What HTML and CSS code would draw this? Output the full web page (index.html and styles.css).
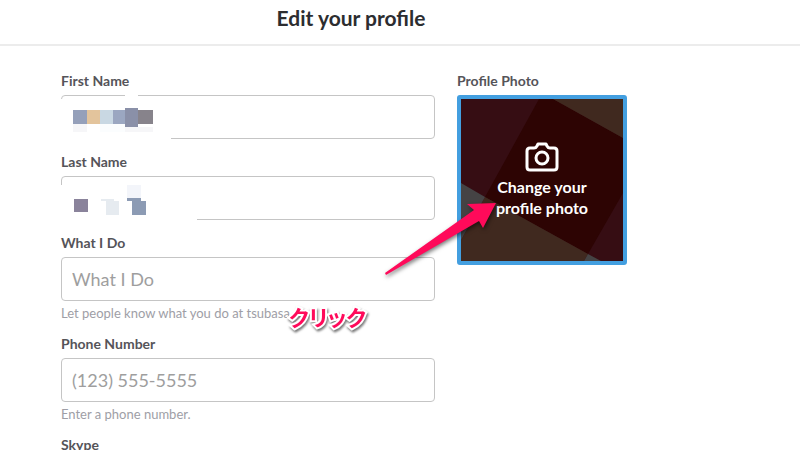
FILE: index.html
```html
<!DOCTYPE html>
<html lang="en">
<head>
<meta charset="utf-8">
<title>Edit your profile</title>
<link rel="stylesheet" href="styles.css">
</head>
<body>
<header class="header"><h1 class="title">Edit your profile</h1></header>
<main class="profile">
  <form class="form">
    <div class="field">
      <label class="label" for="first">First Name</label>
      <div class="control">
        <input class="input" id="first" type="text">
        <svg class="mosaic" width="136" height="48" aria-hidden="true">
          <path fill="#fff" d="M0 4H64V0H77V4H110V48H0Z"/>
          <path fill="#95a0ba" d="M12 15h14v14H12z"/><path fill="#e3c49c" d="M26 15h13v14H26z"/>
          <path fill="#c9d8e3" d="M39 15h13v14H39z"/><path fill="#9ba7c1" d="M52 15h12v14H52z"/>
          <path fill="#87838b" d="M77 15h15v14H77z"/><path fill="#8a90a8" d="M64 13h13v19H64z"/>
          <path fill="#f6f6f8" d="M12 29h14v8H12zM64 32h28v5H64z"/><path fill="#fbfdfe" d="M39 29h25v8H39z"/>
        </svg>
      </div>
    </div>
    <div class="field">
      <label class="label" for="last">Last Name</label>
      <div class="control">
        <input class="input" id="last" type="text">
        <svg class="mosaic" width="136" height="48" aria-hidden="true">
          <path fill="#fff" d="M0 9H136V48H0Z"/>
          <path fill="#8a839b" d="M13 23h14v13H13z"/>
          <path fill="#e6ebf0" d="M40 23h13v2h5v14H45V25h-5z"/>
          <path fill="#f3f5fa" d="M66 9h14v14H66z"/>
          <path fill="#8c9bb4" d="M66 22h14v3h5v14H71V25h-5z"/>
        </svg>
      </div>
    </div>
    <div class="field">
      <label class="label" for="role">What I Do</label>
      <div class="control"><input class="input" id="role" type="text" placeholder="What I Do"></div>
      <p class="help">Let people know what you do at tsubasa.</p>
    </div>
    <div class="field">
      <label class="label" for="phone">Phone Number</label>
      <div class="control"><input class="input" id="phone" type="tel" placeholder="(123) 555-5555"></div>
      <p class="help">Enter a phone number.</p>
    </div>
    <div class="field">
      <label class="label" for="skype">Skype</label>
      <div class="control"><input class="input" id="skype" type="text"></div>
    </div>
  </form>
  <section class="photo">
    <h2 class="label">Profile Photo</h2>
    <button class="avatar" type="button">
      <svg class="pattern" viewBox="0 0 162 162" preserveAspectRatio="none" aria-hidden="true">
        <path fill="#360d13" d="M0 0h162v162H0z"/>
        <path fill="#2d0403" d="M78 0H92L162 39V94L127 155 24 98Z"/>
        <path fill="#40291f" d="M92 0H162V39ZM24 98 127 155 123 162H0V141Z"/>
        <path fill="#454344" d="M0 84 24 98 0 141ZM127 155 140 162H123Z"/>
      </svg>
      <svg class="camera" width="34" height="30" viewBox="0 0 34 30" fill="none" stroke="#fff" stroke-width="3" stroke-linejoin="round" aria-hidden="true">
        <path d="M5 6H9Q11 6 12 4L13 2H21L22 4Q23 6 25 6H29Q32 6 32 9V25Q32 28 29 28H5Q2 28 2 25V9Q2 6 5 6Z"/>
        <circle cx="17" cy="16" r="6"/>
      </svg>
      <span class="caption">Change your<br>profile photo</span>
    </button>
    <svg class="arrow" width="120" height="80" viewBox="0 0 120 80" aria-hidden="true">
      <path fill="#ff0a5a" d="M5 73 94 10 87 4 116 3 103 28 99 21 6 75Z"/>
    </svg>
    <span class="note" lang="ja">クリック</span>
  </section>
</main>
</body>
</html>
```
FILE: styles.css
```css
* { box-sizing: border-box; }
body {
  margin: 0;
  background: #fff;
  color: #2c2d30;
  font-family: Lato, "Noto Sans CJK JP", sans-serif;
}
.header {
  padding: 4px 98px 12px 0;
  border-bottom: 2px solid #ececec;
  text-align: center;
}
.title { margin: 0; font-size: 21px; line-height: 28px; font-weight: 700; }
.profile {
  display: grid;
  grid-template-columns: 1fr 170px;
  gap: 22px;
  padding: 25px 173px 0 61px;
}
.field { margin-bottom: 13px; }
.field:has(.help) { margin-bottom: 11px; }
.label {
  display: block;
  margin: 0 0 4px;
  color: #555459;
  font-size: 14px;
  line-height: 20px;
  font-weight: 700;
}
.control { position: relative; }
.input {
  display: block;
  width: 100%;
  height: 44px;
  padding: 0 10px;
  border: 1px solid #c5c5c5;
  border-radius: 4px;
  background: #fff;
  color: #555459;
  font: 18px Lato, sans-serif;
}
.input::placeholder { color: #9e9e9e; opacity: 1; }
.mosaic { position: absolute; top: 0; left: 0; }
.help { margin: 2px 0 0; color: #9e9ea6; font-size: 13px; line-height: 20px; }
.photo { position: relative; }
.avatar {
  position: relative;
  display: flex;
  flex-direction: column;
  align-items: center;
  justify-content: center;
  gap: 4px;
  width: 100%;
  aspect-ratio: 1;
  padding: 0;
  border: 4px solid #439fe0;
  border-radius: 3px;
  color: #fff;
  font: 700 16px/21px Lato, sans-serif;
}
.pattern { position: absolute; inset: 0; width: 100%; height: 100%; }
.camera, .caption { position: relative; }
.arrow {
  position: absolute;
  top: 129px;
  left: -77px;
  filter: drop-shadow(1px 2px 2px #0008);
}
.note {
  position: absolute;
  top: 227px;
  left: -168px;
  color: #ff0a5a;
  font: 700 22px/36px "Noto Sans CJK JP", sans-serif;
  font-feature-settings: "palt";
  white-space: nowrap;
  paint-order: stroke fill;
  -webkit-text-stroke: 4px #fff;
  filter: drop-shadow(1px 2px 1px #0008);
}
```
